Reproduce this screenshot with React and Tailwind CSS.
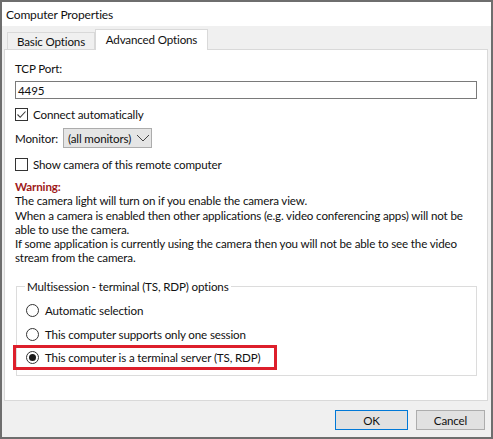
import React from "react";

const font = { fontFamily: 'Lato, "Noto Sans", sans-serif' };

function CheckBox({ checked, label }) {
  return (
    <div className="flex items-center h-[14px]">
      <span className="w-[13px] h-[13px] border border-[#333333] bg-white flex items-center justify-center">
        {checked && (
          <svg width="11" height="11" viewBox="0 0 11 11">
            <path d="M1.5 5.5 L4.2 8.3 L9.5 2.5" fill="none" stroke="#3a3a3a" strokeWidth="1.1" />
          </svg>
        )}
      </span>
      <span className="ml-[5px]">{label}</span>
    </div>
  );
}

function Radio({ checked, label }) {
  return (
    <div className="flex items-center h-[14px]">
      <span className="w-[13px] h-[13px] rounded-full border border-[#333333] bg-white flex items-center justify-center">
        {checked && <span className="w-[7px] h-[7px] rounded-full bg-[#1a1a1a]" />}
      </span>
      <span className="ml-[6px]">{label}</span>
    </div>
  );
}

export default function App() {
  return (
    <div
      className="w-[493px] h-[439px] border-2 border-[#6e6e6e] bg-[#f0f0f0] flex flex-col text-[11.6px] tracking-[-0.15px] text-[#111111] leading-[15px] whitespace-nowrap"
      style={font}
    >
      <div className="h-[24px] bg-white flex items-center pl-[4px] text-[12px]">
        Computer Properties
      </div>

      <div className="px-[2px] pt-[2px]">
        <div className="flex items-end h-[21px] pl-[3px]">
          <div className="h-[17px] w-[88px] border border-b-0 border-[#d9d9d9] bg-[#f0f0f0] flex items-center justify-center">
            Basic Options
          </div>
          <div className="relative z-10 h-[21px] w-[113px] -mb-px border border-b-0 border-[#d9d9d9] bg-white flex items-center justify-center pb-[2px]">
            Advanced Options
          </div>
        </div>

        <div className="h-[352px] mr-[1px] border border-[#d9d9d9] bg-white px-[10px] pt-[11px]">
          <div>TCP Port:</div>
          <div className="mt-[5px] h-[18px] border border-[#7a7a7a] flex items-center pl-[2px]">4495</div>

          <div className="mt-[8px]">
            <CheckBox checked label="Connect automatically" />
          </div>

          <div className="mt-[7px] flex items-center">
            <span>Monitor:</span>
            <div className="ml-[5px] h-[20px] w-[89px] border border-[#acacac] bg-[#e5e5e5] flex items-center pl-[4px] gap-[5px]">
              <span>(all monitors)</span>
              <svg width="14" height="8" viewBox="0 0 14 8">
                <path d="M1 1 L7 7 L13 1" fill="none" stroke="#444" strokeWidth="1" />
              </svg>
            </div>
          </div>

          <div className="mt-[9px]">
            <CheckBox label="Show camera of this remote computer" />
          </div>

          <div className="mt-[9px] leading-[14.3px]">
            <div className="font-bold text-[#a01a1a]">Warning:</div>
            <div>The camera light will turn on if you enable the camera view.</div>
            <div>
              When a camera is enabled then other applications (e.g. video conferencing apps) will not be
              <br />
              able to use the camera.
            </div>
            <div>
              If some application is currently using the camera then you will not be able to see the video
              <br />
              stream from the camera.
            </div>
          </div>

          <fieldset className="mt-[13px] ml-[1px] border border-[#dcdcdc] h-[97px] px-[9px]">
            <legend className="ml-[-1px] px-[2px]">Multisession - terminal (TS, RDP) options</legend>
            <div className="flex flex-col gap-[9.5px] pt-[10px]">
              <Radio label="Automatic selection" />
              <Radio label="This computer supports only one session" />
              <div className="relative">
                <Radio checked label="This computer is a terminal server (TS, RDP)" />
                <span className="absolute left-[-13px] top-[-6px] w-[264px] h-[25px] border-[3px] border-[#dd1f2b]" />
              </div>
            </div>
          </fieldset>
        </div>
      </div>

      <div className="flex justify-end gap-[8px] pr-[6px] mt-[9px]">
        <button className="w-[73px] h-[20px] border border-[#0078d7] bg-[#e1e1e1] flex items-center justify-center">
          OK
        </button>
        <button className="w-[69px] h-[20px] border border-[#adadad] bg-[#e1e1e1] flex items-center justify-center">
          Cancel
        </button>
      </div>
    </div>
  );
}
